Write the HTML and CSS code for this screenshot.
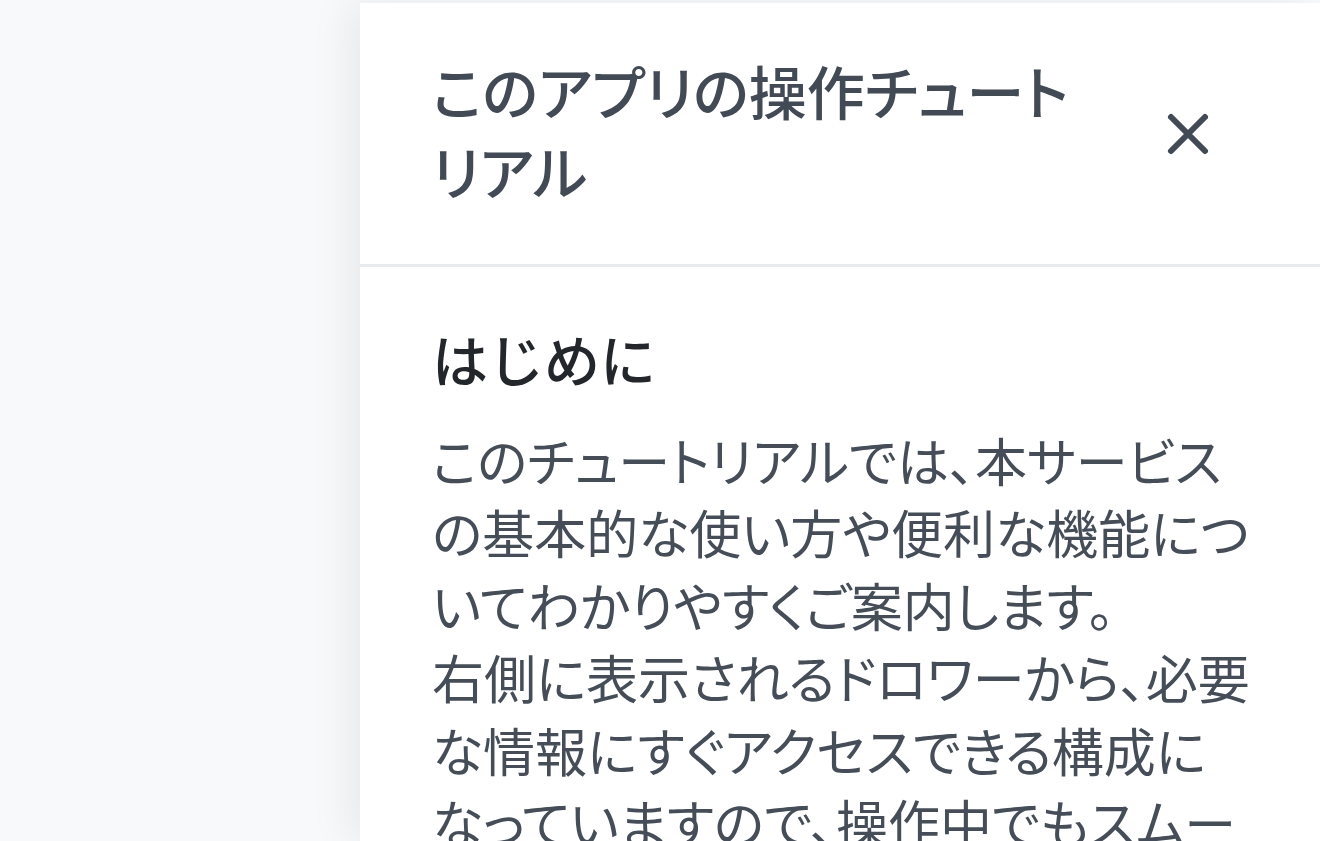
FILE: index.html
```html
<!DOCTYPE html>
<html lang="ja">

<head>
    <meta charset="UTF-8">
    <meta name="viewport" content="width=device-width, initial-scale=1.0">
    <title>チュートリアル</title>
    <link rel="stylesheet" href="styles.css">
</head>

<body>
    <div class="page"></div>

    <!-- ドロワー -->
    <aside class="drawer">
        <div class="drawer-header">
            <h2 class="drawer-title">このアプリの操作チュートリアル</h2>
            <button class="close-btn" aria-label="閉じる">
                <svg viewBox="0 0 44 44" width="44" height="44">
                    <path d="M5 5 L39 39 M39 5 L5 39" />
                </svg>
            </button>
        </div>
        <div class="drawer-body">
            <h3 class="section-title">はじめに</h3>
            <p class="section-text">このチュートリアルでは、本サービスの基本的な使い方や便利な機能についてわかりやすくご案内します。<br>右側に表示されるドロワーから、必要な情報にすぐアクセスできる構成になっていますので、操作中でもスムーズに確認できます。</p>
        </div>
    </aside>
</body>

</html>
```

FILE: styles.css
```css
/* ベース */
body {
    margin: 0;
    height: 841px;
    overflow: hidden;
    background: #f8f9fa;
    font-family: "Noto Sans CJK JP", "Noto Sans", sans-serif;
}

.page {
    height: 100%;
}

/* ドロワー */
.drawer {
    position: fixed;
    top: 3px;
    right: 0;
    bottom: 0;
    width: 960px;
    background: #fff;
    box-shadow: -10px 0 40px rgba(0, 0, 0, 0.07);
    overflow: hidden;
}

.drawer-header {
    display: flex;
    align-items: center;
    justify-content: space-between;
    padding: 47px 92px 54px 72px;
    border-bottom: 3px solid #e9ecef;
}

.drawer-title {
    margin: 0;
    max-width: 668px;
    font-size: 58px;
    font-weight: 500;
    line-height: 80px;
    color: #414a55;
    font-feature-settings: "palt";
}

.close-btn {
    display: flex;
    align-items: center;
    justify-content: center;
    width: 80px;
    height: 80px;
    margin-top: 8px;
    padding: 0;
    border: none;
    background: none;
    cursor: pointer;
}

.close-btn path {
    fill: none;
    stroke: #414a55;
    stroke-width: 6;
    stroke-linecap: round;
}

.drawer-body {
    padding: 51px 48px 0 72px;
}

.section-title {
    margin: 0 0 26px;
    font-size: 56px;
    font-weight: 500;
    line-height: 80px;
    color: #23272b;
}

.section-text {
    margin: 0;
    width: 820px;
    font-size: 52px;
    line-height: 72.4px;
    color: #454e58;
    font-feature-settings: "palt";
}
```
